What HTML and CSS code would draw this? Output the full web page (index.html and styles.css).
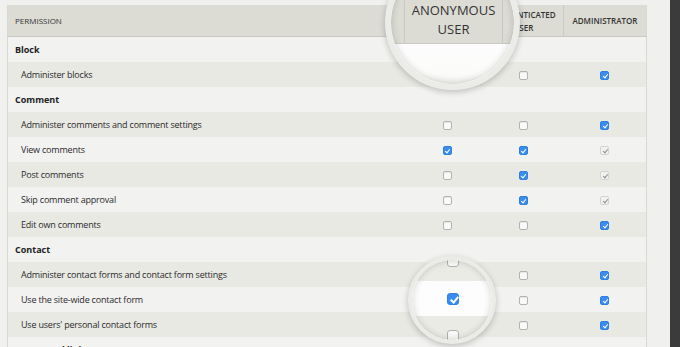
FILE: index.html
```html
<!DOCTYPE html>
<html lang="en">
<head>
  <meta charset="UTF-8" />
  <meta name="viewport" content="width=device-width, initial-scale=1.0" />
  <title>Permissions</title>
  <link rel="stylesheet" href="styles.css">
</head>
<body>

<div class="page">
  <table class="perms">
    <colgroup>
      <col class="c-name"><col class="c-anon"><col class="c-auth"><col class="c-admin">
    </colgroup>
    <thead>
      <tr>
        <th class="name">Permission</th>
        <th class="hidden-head">Anonymous user</th>
        <th>Authenticated user</th>
        <th>Administrator</th>
      </tr>
    </thead>
    <tbody>
      <tr class="module"><td colspan="4">Block</td></tr>
      <tr class="band"><td class="name">Administer blocks</td><td></td><td><span class="cb"></span></td><td><span class="cb on"></span></td></tr>
      <tr class="module"><td colspan="4">Comment</td></tr>
      <tr class="band"><td class="name">Administer comments and comment settings</td><td><span class="cb"></span></td><td><span class="cb"></span></td><td><span class="cb on"></span></td></tr>
      <tr><td class="name">View comments</td><td><span class="cb on"></span></td><td><span class="cb on"></span></td><td><span class="cb dis"></span></td></tr>
      <tr class="band"><td class="name">Post comments</td><td><span class="cb"></span></td><td><span class="cb on"></span></td><td><span class="cb dis"></span></td></tr>
      <tr><td class="name">Skip comment approval</td><td><span class="cb"></span></td><td><span class="cb on"></span></td><td><span class="cb dis"></span></td></tr>
      <tr class="band"><td class="name">Edit own comments</td><td><span class="cb"></span></td><td><span class="cb"></span></td><td><span class="cb on"></span></td></tr>
      <tr class="module"><td colspan="4">Contact</td></tr>
      <tr class="band"><td class="name">Administer contact forms and contact form settings</td><td></td><td><span class="cb"></span></td><td><span class="cb on"></span></td></tr>
      <tr><td class="name">Use the site-wide contact form</td><td></td><td><span class="cb"></span></td><td><span class="cb on"></span></td></tr>
      <tr class="band"><td class="name">Use users' personal contact forms</td><td></td><td><span class="cb"></span></td><td><span class="cb on"></span></td></tr>
      <tr class="module"><td colspan="4">Contextual links</td></tr>
    </tbody>
  </table>

  <!-- magnifier over the column header -->
  <div class="lens lens-head">
    <div class="lh-top">
      <div class="lh-col">Anonymous<br>user</div>
    </div>
    <div class="lh-body"></div>
  </div>

  <!-- magnifier over the site-wide contact checkbox -->
  <div class="lens lens-cb">
    <div class="stripe s1"></div>
    <div class="stripe s2"></div>
    <div class="stripe s3"></div>
    <span class="big-cb top"></span>
    <span class="big-cb on mid"></span>
    <span class="big-cb bot"></span>
  </div>
</div>

<div class="rail"></div>

</body>
</html>
```

FILE: styles.css
```css
html, body { height: 100%; }
body { margin: 0; display: flex; background: #f0f0ef; font-family: "Open Sans", "DejaVu Sans", sans-serif; color: #333; overflow: hidden; }
.page { flex: 1; position: relative; padding: 5px 23px 0 7px; }
.rail { width: 10px; background: #3b3b3b; }

.perms { width: 640px; table-layout: fixed; border-collapse: collapse; border-left: 1px solid #d9d9d4; border-right: 1px solid #d9d9d4; }
.c-name { width: 403px; }
.c-anon { width: 72px; }
.c-auth { width: 80px; }
.c-admin { width: 83px; }

.perms th { height: 31px; background: #dcdcd5; border-bottom: 1px solid #c9c9c1; border-left: 1px solid #cbcbc4; font-size: 8px; font-weight: 600; text-transform: uppercase; line-height: 13px; padding: 0 4px; color: #333; }
.perms th.name { text-align: left; padding-left: 7px; font-weight: 500; border-left: none; }
.perms th.hidden-head { color: transparent; }

.perms td { height: 25px; padding: 0; text-align: center; font-size: 9px; letter-spacing: -0.2px; background: #f2f2f1; color: #2a2a2a; }
.perms tr.band td { background: #e9e9e4; }
.perms td.name { text-align: left; padding-left: 13px; }
.perms tr.module td { text-align: left; padding-left: 7px; font-weight: 700; color: #222; letter-spacing: 0; }

.cb { display: inline-block; width: 9px; height: 9px; box-sizing: border-box; border: 1px solid #b3b3b0; border-radius: 2px; background: #fafafa; vertical-align: middle; position: relative; box-shadow: inset 0 1px 1px rgba(0,0,0,0.08); }
.cb.on { background: #3a8df0; border-color: #2f7fdf; box-shadow: none; }
.cb.dis { background: #f1f1f0; border-color: #d4d4d2; box-shadow: none; }
.cb.on::after, .cb.dis::after { content: ""; position: absolute; left: 2.5px; top: 0.5px; width: 2px; height: 4px; border-right: 1.3px solid #fff; border-bottom: 1.3px solid #fff; transform: rotate(40deg); }
.cb.dis::after { border-color: #8e8e8e; }

.lens { position: absolute; border-radius: 50%; box-sizing: border-box; overflow: hidden; border-style: solid; border-color: #ebebe8; box-shadow: 0 2px 6px rgba(0,0,0,0.22); }
.lens::after { content: ""; position: absolute; inset: 0; border-radius: 50%; box-shadow: inset 0 0 7px rgba(0,0,0,0.18); }

.lens-head { left: 385px; top: -45px; width: 135px; height: 135px; border-width: 6px; background: #fcfcfc; }
.lh-top { position: absolute; left: 0; right: 0; top: 0; height: 82px; background: #dcdcd5; border-bottom: 1px solid #cbcbc3; }
.lh-col { position: absolute; left: 13px; top: 0; width: 99px; height: 82px; box-sizing: border-box; border-left: 1px solid #c8c8c0; border-right: 1px solid #c8c8c0; display: flex; flex-direction: column; justify-content: flex-end; padding-bottom: 4px; text-align: center; text-transform: uppercase; font-size: 13px; font-weight: 500; line-height: 19px; color: #333; }
.lh-body { position: absolute; left: 0; right: 0; top: 83px; bottom: 0; background: linear-gradient(#fdfdfd 0, #fbfbfa 30px, #ececE7 42px); }

.lens-cb { left: 408px; top: 256px; width: 88px; height: 88px; border-width: 4px; background: #fcfcfc; }
.stripe { position: absolute; left: 0; right: 0; }
.s1 { top: -4px; height: 25px; background: #ebebe6; }
.s2 { top: 21px; height: 35px; background: #fdfdfd; }
.s3 { top: 56px; height: 30px; background: #ebebe6; }
.big-cb { position: absolute; width: 12px; height: 12px; box-sizing: border-box; border: 1px solid #b0b0ad; border-radius: 3px; background: #f9f9f9; left: 35px; }
.big-cb.top { top: -5px; }
.big-cb.bot { top: 70px; }
.big-cb.mid { top: 33px; left: 35px; }
.big-cb.on { background: #3a8df0; border-color: #2f80e0; }
.big-cb.on::after { content: ""; position: absolute; left: 3.5px; top: 1px; width: 3px; height: 6px; border-right: 2px solid #fff; border-bottom: 2px solid #fff; transform: rotate(40deg); }
```
